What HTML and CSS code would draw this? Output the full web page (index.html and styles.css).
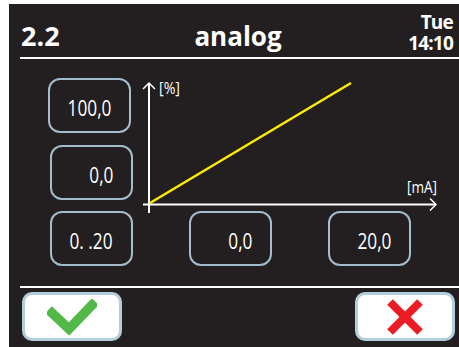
FILE: index.html
```html
<!DOCTYPE html>
<html lang="en">
<head>
  <meta charset="UTF-8" />
  <title>analog</title>
  <link rel="stylesheet" href="styles.css">
</head>
<body>
  <div class="screen">
    <div class="top">
      <div class="menu-no">2.2</div>
      <div class="title">analog</div>
      <div class="clock">
        <div>Tue</div>
        <div>14:10</div>
      </div>
    </div>

    <div class="upper">
      <div class="col">
        <div class="field"><span>100,0</span></div>
        <div class="field shift"><span>0,0</span></div>
      </div>
      <svg class="chart" width="300" height="132" viewBox="0 0 300 132">
        <line x1="9" y1="5" x2="9" y2="135" stroke="#fff" stroke-width="2" />
        <polyline points="3,11 9,5 15,11" fill="none" stroke="#fff" stroke-width="1.5" />
        <line x1="3" y1="126.5" x2="296" y2="126.5" stroke="#fff" stroke-width="2" />
        <polyline points="290,120.5 296,126.5 290,132.5" fill="none" stroke="#fff" stroke-width="1.5" />
        <line x1="10" y1="125" x2="211" y2="5" stroke="#ffec00" stroke-width="2.5" />
        <text x="19" y="16" class="axis-label" textLength="21" lengthAdjust="spacingAndGlyphs">[%]</text>
        <text x="267" y="115" class="axis-label" textLength="30" lengthAdjust="spacingAndGlyphs">[mA]</text>
      </svg>
    </div>

    <div class="lower">
      <div class="field"><span>0. .20</span></div>
      <div class="field"><span>0,0</span></div>
      <div class="field"><span>20,0</span></div>
    </div>

    <div class="rule"></div>

    <div class="actions">
      <button class="btn">
        <svg width="50" height="36" viewBox="0 0 50 36">
          <polyline points="5,14 22,30 45,6" fill="none" stroke="#52b848" stroke-width="9.5" stroke-linecap="square" stroke-linejoin="miter" />
        </svg>
      </button>
      <button class="btn">
        <svg width="40" height="38" viewBox="0 0 40 38">
          <line x1="5" y1="4" x2="35" y2="34" stroke="#ed1c24" stroke-width="8" />
          <line x1="35" y1="4" x2="5" y2="34" stroke="#ed1c24" stroke-width="8" />
        </svg>
      </button>
    </div>
  </div>
</body>
</html>
```

FILE: styles.css
```css
body {
  margin: 0;
  background-color: #ffffff;
  font-family: 'Open Sans', sans-serif;
  color: #ffffff;
}
.screen {
  margin: 4px 0 0 9px;
  width: 450px;
  height: 343px;
  background-color: #231f20;
  overflow: hidden;
}
.top {
  height: 53px;
  margin-left: 11px;
  border-bottom: 2px solid #ffffff;
  display: flex;
  align-items: flex-end;
  font-weight: bold;
}
.menu-no {
  width: 120px;
  font-size: 27px;
  line-height: 26px;
  padding-bottom: 8px;
  margin-left: 1px;
}
.title {
  flex: 1;
  text-align: center;
  font-size: 26px;
  line-height: 26px;
  padding-bottom: 8px;
  margin-left: 2px;
}
.clock {
  width: 120px;
  text-align: right;
  padding-right: 6px;
  font-size: 19px;
  line-height: 21px;
  letter-spacing: -0.8px;
  padding-bottom: 3px;
}
.upper {
  display: flex;
  margin-top: 19px;
  margin-left: 39px;
}
.col {
  width: 85px;
  display: flex;
  flex-direction: column;
  gap: 12px;
}
.field {
  box-sizing: border-box;
  width: 83px;
  height: 55px;
  border: 2px solid #a3bccb;
  border-radius: 12px;
  display: flex;
  align-items: center;
  justify-content: flex-end;
  padding: 5px 18px 0 0;
  font-size: 21px;
}
.field span {
  display: inline-block;
  transform: scaleX(0.82);
  transform-origin: right center;
}
.shift { margin-left: 2px; }
.chart {
  margin-left: 7px;
  overflow: visible;
}
.axis-label {
  fill: #ffffff;
  font-size: 16px;
}
.lower {
  display: flex;
  gap: 56px;
  margin: 1px 0 0 41px;
}
.rule {
  height: 2px;
  margin: 20px 0 0 11px;
  background-color: #ffffff;
}
.actions {
  display: flex;
  justify-content: space-between;
  padding: 4px 4px 0 13px;
}
.btn {
  width: 100px;
  height: 49px;
  background-color: #ffffff;
  border: 3px solid #b3cedb;
  border-radius: 10px;
  display: flex;
  align-items: center;
  justify-content: center;
  padding: 0;
}
```
